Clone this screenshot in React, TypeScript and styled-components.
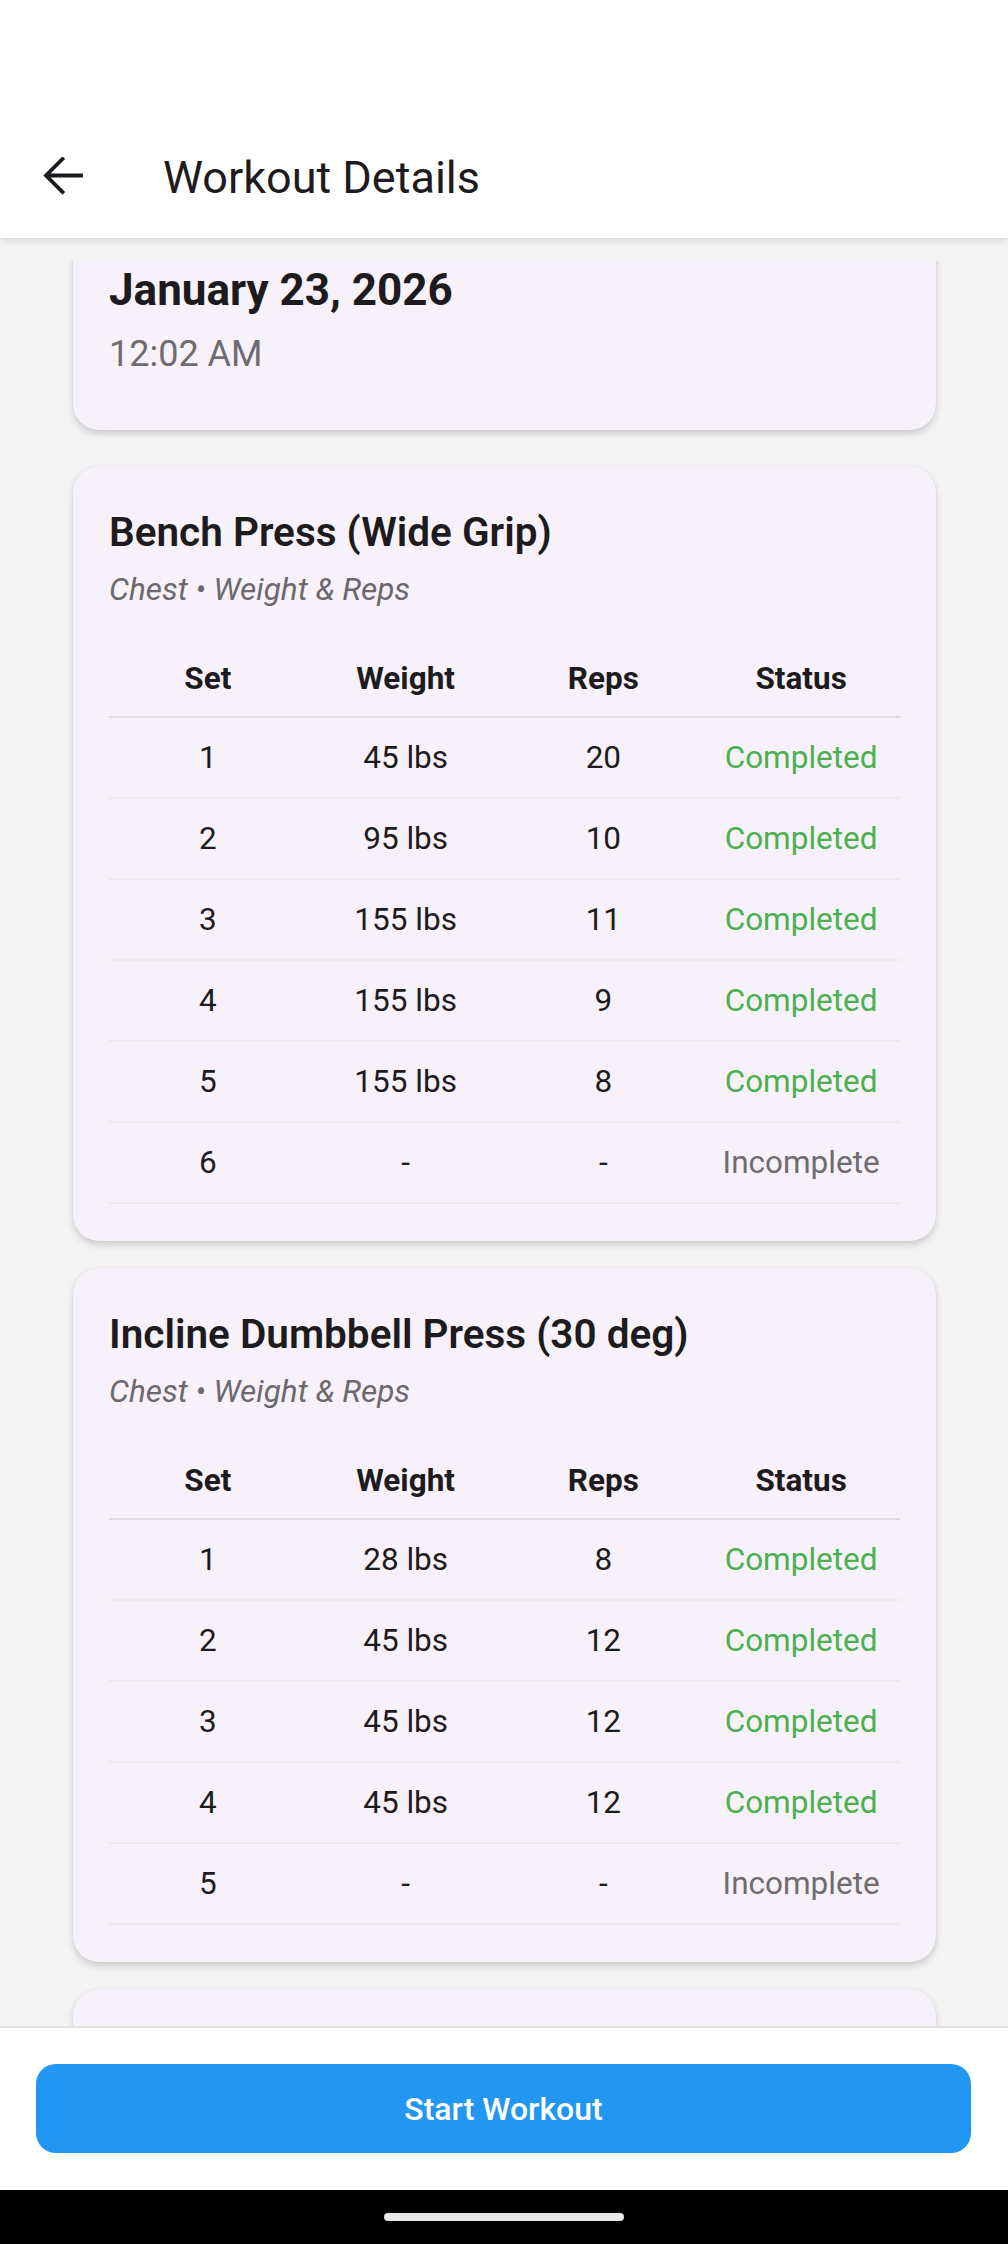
import React from "react";
import styled, { createGlobalStyle } from "styled-components";

const GlobalStyle = createGlobalStyle`
  html, body {
    margin: 0;
    padding: 0;
    background: #ffffff;
  }
  body {
    font-family: Roboto, "Noto Sans", "Liberation Sans", sans-serif;
  }
  * {
    box-sizing: border-box;
  }
`;

const Screen = styled.div`
  display: flex;
  flex-direction: column;
  width: 1008px;
  height: 2244px;
  overflow: hidden;
  background: #f4f4f4;
`;

const Header = styled.header`
  position: relative;
  z-index: 2;
  height: 238px;
  padding-top: 116px;
  background: #ffffff;
  box-shadow: 0 3px 8px rgba(0, 0, 0, 0.12);
`;

const Toolbar = styled.div`
  display: flex;
  align-items: center;
  height: 122px;
  padding-left: 43px;
  gap: 80px;
`;

const BackButton = styled.button`
  display: flex;
  width: 40px;
  height: 40px;
  padding: 0;
  border: none;
  background: transparent;
  color: #1d1b20;
`;

const Title = styled.h1`
  margin: 0;
  font-size: 45px;
  font-weight: 400;
  color: #1d1b20;
`;

const Main = styled.main`
  display: flex;
  flex: 1;
  flex-direction: column;
  padding-top: 23px;
  min-height: 0;
`;

// the list is scrolled a little, so the first card is cut by the top edge
const Viewport = styled.div`
  flex: 1;
  overflow: hidden;
`;

const List = styled.div`
  display: flex;
  flex-direction: column;
  margin-top: -40px;
  padding: 0 72px 0 73px;
`;

const Card = styled.section<{ $gap: number; $minHeight?: number }>`
  margin-bottom: ${(p) => p.$gap}px;
  padding: 43px 36px 37px;
  min-height: ${(p) => p.$minHeight ?? 0}px;
  border-radius: 26px;
  background: #f7f2f9;
  box-shadow: 0 0 1px rgba(0, 0, 0, 0.12), 0 4px 7px rgba(0, 0, 0, 0.16);
`;

const DateCard = styled(Card)`
  padding-top: 52px;
  padding-bottom: 54px;
`;

const DateText = styled.div`
  font-size: 44px;
  line-height: 34px;
  font-weight: 700;
  color: #1d1b20;
`;

const TimeText = styled.div`
  margin-top: 25px;
  font-size: 36px;
  line-height: 44px;
  color: #6e6c70;
`;

const ExerciseName = styled.h2`
  margin: 0;
  font-size: 40.5px;
  line-height: 46px;
  font-weight: 600;
  color: #1d1b20;
`;

const ExerciseMeta = styled.div`
  margin-top: 15px;
  font-size: 31.5px;
  line-height: 40px;
  font-style: italic;
  color: #6b686e;
`;

const Table = styled.div`
  margin-top: 30px;
`;

const Row = styled.div<{ $head?: boolean }>`
  display: grid;
  grid-template-columns: repeat(4, 1fr);
  align-items: center;
  height: ${(p) => (p.$head ? 78 : 81)}px;
  border-bottom: 2px solid ${(p) => (p.$head ? "#dedcdf" : "#eeebef")};
  font-size: 31.5px;
  font-weight: ${(p) => (p.$head ? 700 : 400)};
  color: #1d1b20;
  text-align: center;
`;

const Cell = styled.div<{ $tone?: "done" | "todo" }>`
  color: ${(p) =>
    p.$tone === "done" ? "#4caf50" : p.$tone === "todo" ? "#6e6c70" : "inherit"};
`;

const BottomBar = styled.footer`
  position: relative;
  z-index: 2;
  padding: 36px 37px 37px 36px;
  background: #ffffff;
  border-top: 2px solid #e2e2e2;
`;

const StartButton = styled.button`
  display: flex;
  align-items: center;
  justify-content: center;
  width: 100%;
  height: 89px;
  border: none;
  border-radius: 20px;
  background: #2196f3;
  color: #ffffff;
  font-family: Roboto, "Noto Sans", sans-serif;
  font-size: 32px;
  font-weight: 500;
`;

const NavBar = styled.div`
  display: flex;
  justify-content: center;
  height: 54px;
  padding-top: 23px;
  background: #000000;
`;

const HomeIndicator = styled.div`
  width: 240px;
  height: 8px;
  border-radius: 4px;
  background: #e8e8e8;
`;

type WorkSet = { weight: string; reps: string; done: boolean };

type Exercise = { name: string; meta: string; sets: WorkSet[] };

const done = (weight: number, reps: number): WorkSet => ({
  weight: `${weight} lbs`,
  reps: String(reps),
  done: true,
});

const open: WorkSet = { weight: "-", reps: "-", done: false };

const exercises: Exercise[] = [
  {
    name: "Bench Press (Wide Grip)",
    meta: "Chest • Weight & Reps",
    sets: [done(45, 20), done(95, 10), done(155, 11), done(155, 9), done(155, 8), open],
  },
  {
    name: "Incline Dumbbell Press (30 deg)",
    meta: "Chest • Weight & Reps",
    sets: [done(28, 8), done(45, 12), done(45, 12), done(45, 12), open],
  },
];

const BackArrow = () => (
  <svg width="40" height="40" viewBox="0 0 40 40" fill="none">
    <path
      d="M38 18.5H4M19.5 2L3 18.5L19.5 35"
      stroke="currentColor"
      strokeWidth="3.8"
      strokeLinecap="square"
    />
  </svg>
);

const SetTable = ({ sets }: { sets: WorkSet[] }) => (
  <Table>
    <Row $head>
      <Cell>Set</Cell>
      <Cell>Weight</Cell>
      <Cell>Reps</Cell>
      <Cell>Status</Cell>
    </Row>
    {sets.map((s, i) => (
      <Row key={i}>
        <Cell>{i + 1}</Cell>
        <Cell>{s.weight}</Cell>
        <Cell>{s.reps}</Cell>
        <Cell $tone={s.done ? "done" : "todo"}>
          {s.done ? "Completed" : "Incomplete"}
        </Cell>
      </Row>
    ))}
  </Table>
);

const App = () => {
  return (
    <>
      <GlobalStyle />
      <Screen>
        <Header>
          <Toolbar>
            <BackButton aria-label="Back">
              <BackArrow />
            </BackButton>
            <Title>Workout Details</Title>
          </Toolbar>
        </Header>
        <Main>
          <Viewport>
            <List>
              <DateCard $gap={36}>
                <DateText>January 23, 2026</DateText>
                <TimeText>12:02 AM</TimeText>
              </DateCard>
              {exercises.map((ex) => (
                <Card key={ex.name} $gap={27}>
                  <ExerciseName>{ex.name}</ExerciseName>
                  <ExerciseMeta>{ex.meta}</ExerciseMeta>
                  <SetTable sets={ex.sets} />
                </Card>
              ))}
              <Card $gap={27} $minHeight={300} />
            </List>
          </Viewport>
        </Main>
        <BottomBar>
          <StartButton>Start Workout</StartButton>
        </BottomBar>
        <NavBar>
          <HomeIndicator />
        </NavBar>
      </Screen>
    </>
  );
};

export default App;
